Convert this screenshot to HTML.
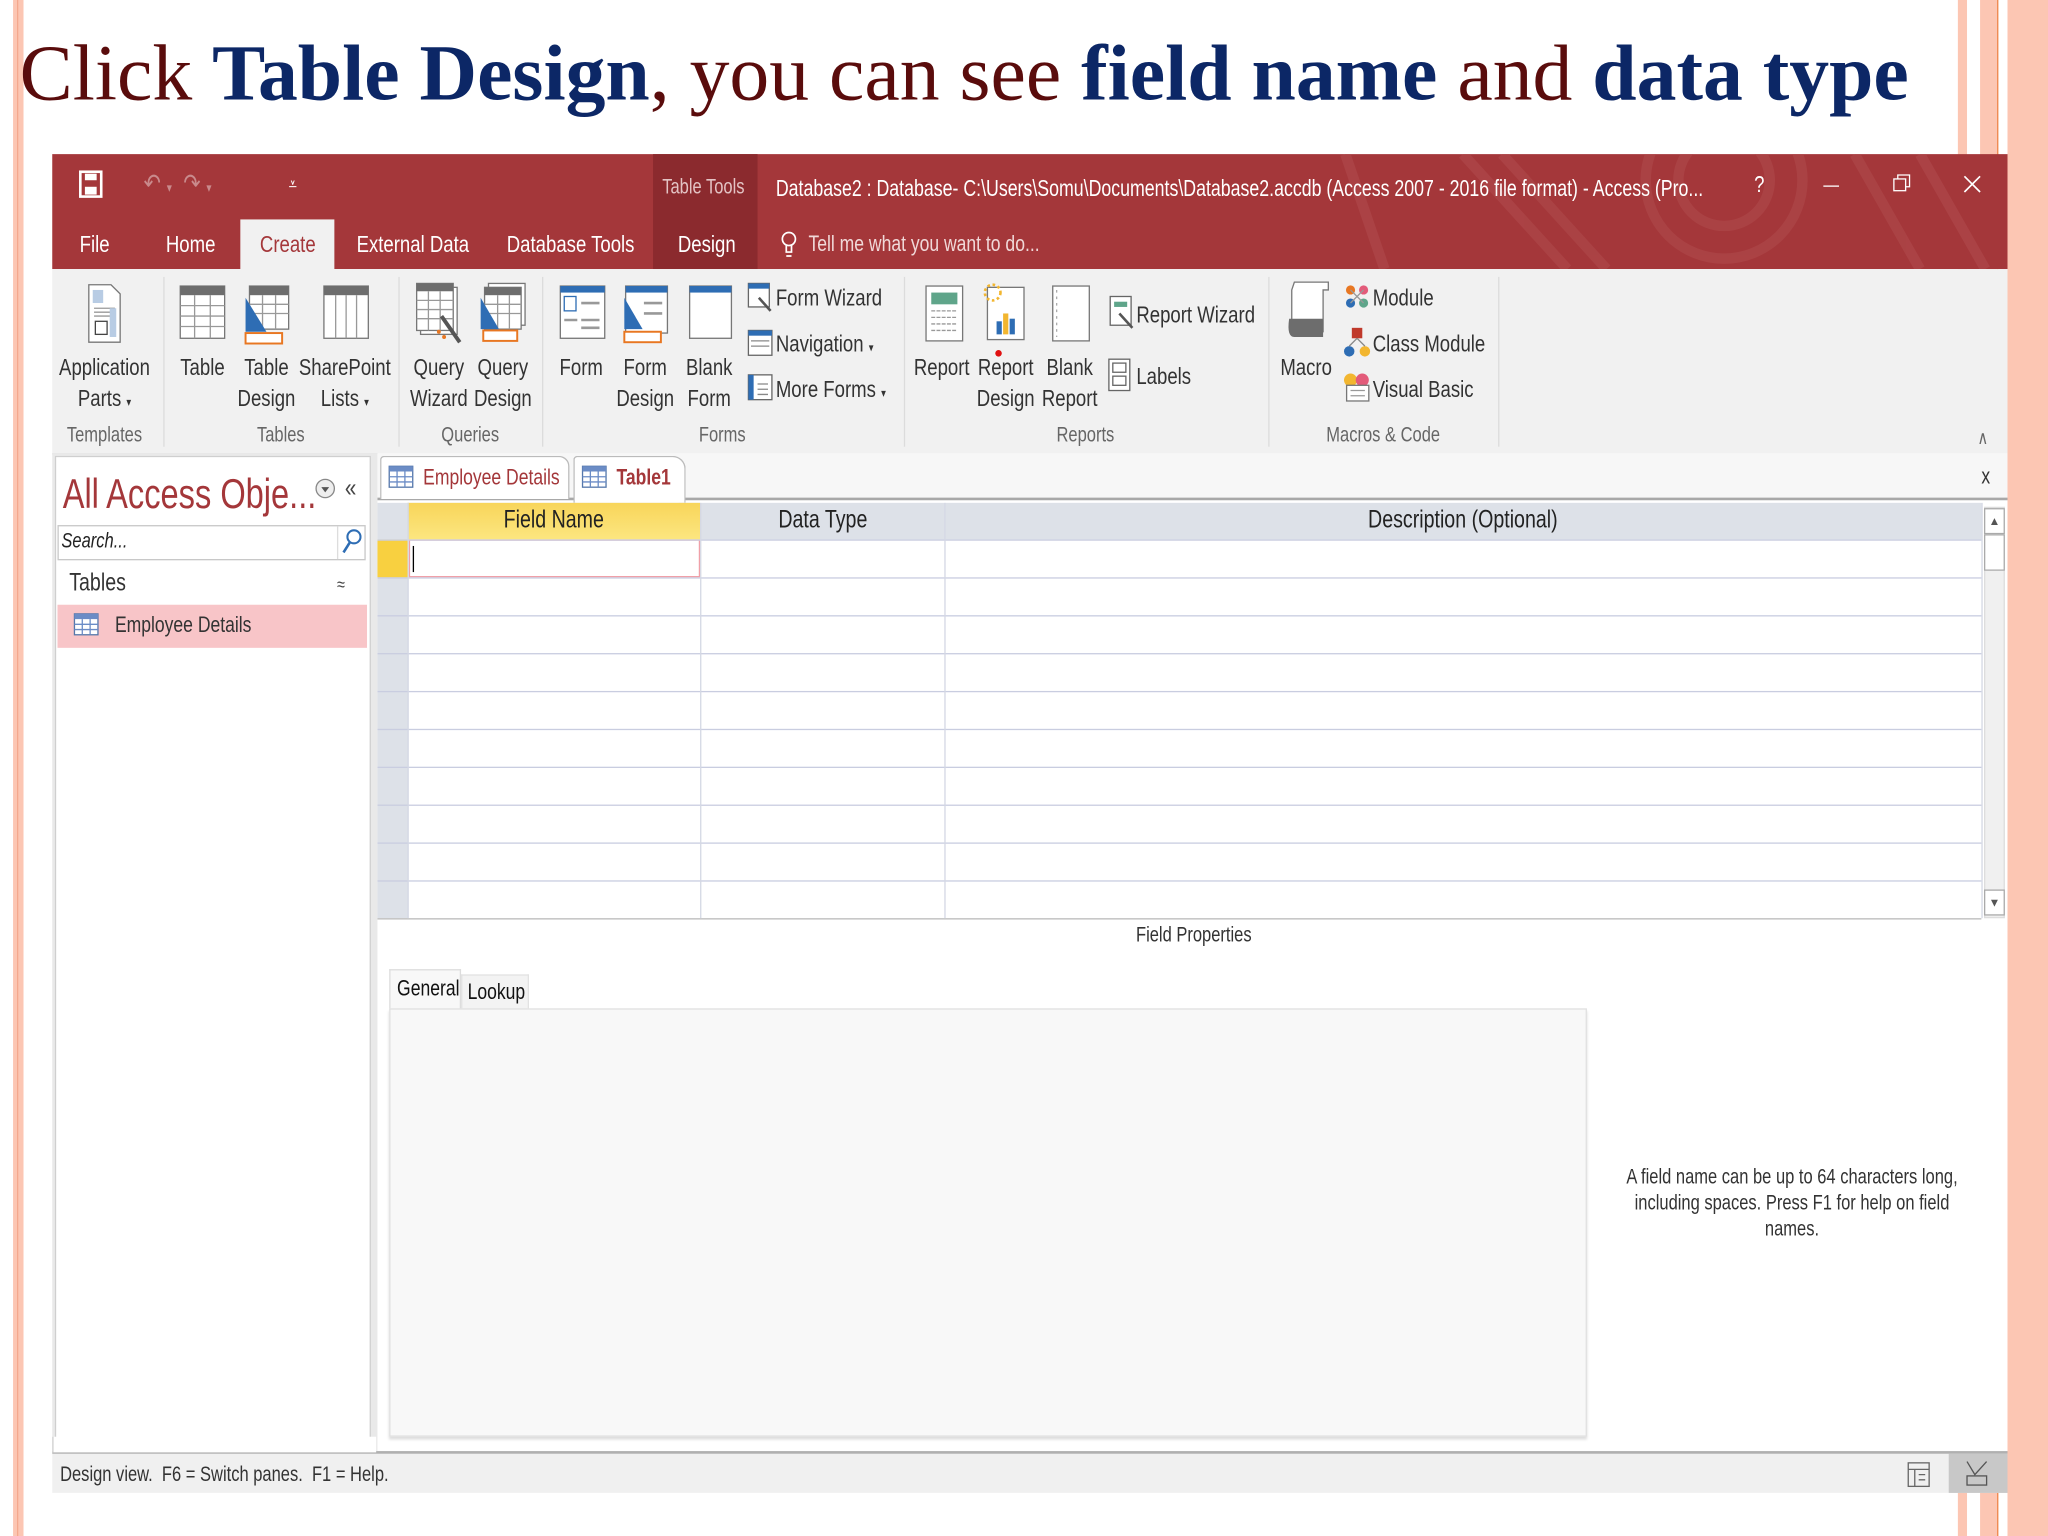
<!DOCTYPE html>
<html><head><meta charset="utf-8">
<style>
html,body{margin:0;padding:0;}
body{width:2048px;height:1536px;overflow:hidden;background:#fff;position:relative;}
#s{position:absolute;left:0;top:0;width:1568px;height:1176px;transform:scale(1.30612);transform-origin:0 0;font-family:"Liberation Sans",sans-serif;}
.a{position:absolute;}
.t{position:absolute;white-space:nowrap;transform-origin:0 50%;transform:scaleX(.79);line-height:20px;}
.c{position:absolute;white-space:nowrap;transform:translateX(-50%) scaleX(.79);line-height:20px;text-align:center;}
.rl{font-size:18px;color:#333;}
.gl{font-size:16px;color:#666;}
.sep{position:absolute;top:212px;width:1px;height:130px;background:#dcdcdc;}
.hl{position:absolute;left:289px;width:1228px;height:1px;background:#c9cde0;}
.vl{position:absolute;top:385px;width:1px;height:318px;background:#d4d8e4;}
</style></head><body>
<div id="s">
<!-- slide borders -->
<div class="a" style="left:10px;top:0;width:8px;height:1176px;background:#fcc6b3"></div>
<div class="a" style="left:13px;top:0;width:1px;height:1176px;background:#f4a88e"></div>
<div class="a" style="left:1499px;top:0;width:7px;height:1176px;background:#fcc6b3"></div>
<div class="a" style="left:1516px;top:0;width:14px;height:1176px;background:#fcc6b3"></div>
<div class="a" style="left:1529px;top:0;width:1px;height:1176px;background:#f0884e"></div>
<div class="a" style="left:1537px;top:0;width:31px;height:1176px;background:#fcc6b3"></div>

<!-- title -->
<div class="a" style="left:15px;top:19px;font-family:'Liberation Serif',serif;font-size:61px;line-height:75px;white-space:nowrap;color:#5a0c0c;">Click <b style="color:#0c2766">Table Design</b>, you can see <b style="color:#0c2766">field name</b> and <b style="color:#0c2766">data type</b></div>

<!-- window -->
<div class="a" style="left:40px;top:118px;width:1497px;height:88px;background:#a4373a"></div>
<div class="a" style="left:500px;top:118px;width:80px;height:88px;background:#8b2a2e"></div>
<svg class="a" style="left:1000px;top:118px" width="537" height="88"><g fill="none" stroke="#b04a4c" stroke-width="8" opacity=".6"><circle cx="320" cy="20" r="60"/><circle cx="320" cy="20" r="35"/><path d="M120 0 L200 88 M150 0 L230 88 M420 0 L470 88 M470 0 L520 88 M30 0 L60 88"/></g></svg>
<!-- title bar icons -->
<svg class="a" style="left:60px;top:130px" width="20" height="22"><rect x="1.5" y="1.5" width="16" height="19" fill="none" stroke="#fff" stroke-width="2"/><rect x="5" y="3" width="9" height="5" fill="#fff"/><rect x="5" y="13" width="9" height="6" fill="#fff"/></svg>
<div class="t" style="left:110px;top:131px;color:#c98a8c;font-size:20px">↶ <span style="font-size:10px">▾</span> &nbsp;↷ <span style="font-size:10px">▾</span></div>
<div class="t" style="left:221px;top:131px;color:#fff;font-size:14px">⩡</div>
<div class="t" style="left:507px;top:134px;color:#e3c3c4;font-size:16px">Table Tools</div>
<div class="t" style="left:594px;top:134px;color:#fff;font-size:18px;transform:scaleX(.755)">Database2 : Database- C:\Users\Somu\Documents\Database2.accdb (Access 2007 - 2016 file format) - Access (Pro...</div>
<div class="t" style="left:1343px;top:131px;color:#fff;font-size:18px">?</div>
<div class="a" style="left:1396px;top:142px;width:12px;height:1px;background:#fff"></div>
<svg class="a" style="left:1449px;top:133px" width="14" height="14"><rect x="1" y="4" width="9" height="9" fill="none" stroke="#fff"/><path d="M4 4 V1 H13 V10 H10" fill="none" stroke="#fff"/></svg>
<svg class="a" style="left:1503px;top:134px" width="14" height="14"><path d="M1 1 L13 13 M13 1 L1 13" stroke="#fff" stroke-width="1.3"/></svg>
<!-- tabs -->
<div class="a" style="left:184px;top:168px;width:72px;height:40px;background:#f1f1f1"></div>
<div class="t rl" style="left:61px;top:177px;color:#fff">File</div>
<div class="t rl" style="left:127px;top:177px;color:#fff">Home</div>
<div class="t rl" style="left:199px;top:177px;color:#a4373a">Create</div>
<div class="t rl" style="left:273px;top:177px;color:#fff">External Data</div>
<div class="t rl" style="left:388px;top:177px;color:#fff">Database Tools</div>
<div class="t rl" style="left:519px;top:177px;color:#fff">Design</div>
<svg class="a" style="left:598px;top:176px" width="12" height="22"><circle cx="6" cy="7" r="5" fill="none" stroke="#fff" stroke-width="1.3"/><path d="M4 12 V17 H8 V12 M4 20 H8" stroke="#fff" fill="none" stroke-width="1.3"/></svg>
<div class="t rl" style="left:619px;top:177px;color:#f0d8d8;font-size:17px">Tell me what you want to do...</div>

<!-- ribbon -->
<div class="a" style="left:40px;top:206px;width:1497px;height:141px;background:#f1f1f1;border-bottom:1px solid #d5d5d5"></div>
<div class="sep" style="left:125px"></div><div class="sep" style="left:305px"></div><div class="sep" style="left:415px"></div><div class="sep" style="left:692px"></div><div class="sep" style="left:971px"></div><div class="sep" style="left:1147px"></div>
<!-- icons -->
<svg class="a" style="left:66px;top:216px" width="28" height="48"><path d="M2 2 H19 L26 9 V46 H2 Z" fill="#fff" stroke="#777"/><rect x="5" y="6" width="8" height="10" fill="#b8cce4"/><path d="M6 20 H22 M6 23 H22 M6 26 H22" stroke="#999"/><rect x="7" y="30" width="9" height="10" fill="#fff" stroke="#444"/><rect x="18" y="20" width="5" height="22" fill="#b8cce4"/></svg>
<svg class="a" style="left:137px;top:218px" width="36" height="42"><rect x="1" y="1" width="34" height="40" fill="#fff" stroke="#777"/><rect x="1" y="1" width="34" height="7" fill="#6d6d6d"/><path d="M1 16 H35 M1 24 H35 M1 32 H35 M12 8 V41 M24 8 V41" stroke="#999"/></svg>
<svg class="a" style="left:186px;top:218px" width="38" height="46"><rect x="5" y="1" width="30" height="33" fill="#fff" stroke="#777"/><rect x="5" y="1" width="30" height="7" fill="#6d6d6d"/><path d="M5 15 H35 M5 22 H35 M15 8 V34 M25 8 V34" stroke="#999"/><path d="M2 10 L2 36 L18 36 Z" fill="#2e6db4"/><rect x="2" y="37" width="28" height="8" fill="#fff" stroke="#e87722" stroke-width="1.5"/></svg>
<svg class="a" style="left:247px;top:218px" width="36" height="42"><rect x="1" y="1" width="34" height="40" fill="#fff" stroke="#777"/><rect x="1" y="1" width="34" height="7" fill="#6d6d6d"/><path d="M10 8 V41 M18 8 V41 M26 8 V41" stroke="#999"/></svg>
<svg class="a" style="left:318px;top:216px" width="38" height="48"><rect x="4" y="4" width="28" height="36" fill="#fff" stroke="#777"/><rect x="1" y="1" width="28" height="36" fill="#fff" stroke="#777"/><rect x="1" y="1" width="28" height="6" fill="#6d6d6d"/><path d="M1 14 H29 M1 21 H29 M1 28 H29 M10 7 V37 M19 7 V37" stroke="#999"/><path d="M20 26 L34 46" stroke="#555" stroke-width="3"/><circle cx="18" cy="38" r="1.5" fill="#e87722"/><circle cx="22" cy="42" r="1.5" fill="#e87722"/></svg>
<svg class="a" style="left:366px;top:216px" width="38" height="48"><rect x="8" y="1" width="28" height="32" fill="#fff" stroke="#777"/><rect x="5" y="4" width="28" height="32" fill="#fff" stroke="#777"/><rect x="5" y="4" width="28" height="6" fill="#6d6d6d"/><path d="M5 17 H33 M5 24 H33 M15 10 V36 M24 10 V36" stroke="#999"/><path d="M2 12 L2 36 L16 36 Z" fill="#2e6db4"/><rect x="4" y="37" width="26" height="8" fill="#fff" stroke="#e87722" stroke-width="1.5"/></svg>
<svg class="a" style="left:428px;top:218px" width="36" height="44"><rect x="1" y="1" width="34" height="40" fill="#fff" stroke="#777"/><rect x="1" y="1" width="34" height="5" fill="#2e6db4"/><rect x="4" y="9" width="9" height="11" fill="#fff" stroke="#2e6db4"/><path d="M17 14 H31 M4 27 H14 M17 27 H31 M17 33 H31" stroke="#999" stroke-width="2"/></svg>
<svg class="a" style="left:476px;top:218px" width="38" height="46"><rect x="3" y="1" width="32" height="36" fill="#fff" stroke="#777"/><rect x="3" y="1" width="32" height="5" fill="#2e6db4"/><path d="M17 14 H31 M17 22 H31" stroke="#999" stroke-width="2"/><path d="M2 10 L2 34 L16 34 Z" fill="#2e6db4"/><rect x="2" y="36" width="28" height="8" fill="#fff" stroke="#e87722" stroke-width="1.5"/></svg>
<svg class="a" style="left:527px;top:218px" width="34" height="44"><rect x="1" y="1" width="32" height="40" fill="#fff" stroke="#777"/><rect x="1" y="1" width="32" height="5" fill="#2e6db4"/></svg>
<svg class="a" style="left:572px;top:216px" width="20" height="24"><rect x="1" y="1" width="16" height="18" fill="#fff" stroke="#666"/><rect x="1" y="1" width="16" height="4" fill="#2e6db4"/><path d="M9 12 L18 22" stroke="#555" stroke-width="2"/></svg>
<svg class="a" style="left:572px;top:252px" width="20" height="22"><rect x="1" y="1" width="18" height="19" fill="#fff" stroke="#666"/><rect x="1" y="1" width="18" height="4" fill="#2e6db4"/><path d="M3 9 H17 M3 13 H17" stroke="#888"/></svg>
<svg class="a" style="left:572px;top:286px" width="20" height="22"><rect x="1" y="1" width="18" height="19" fill="#fff" stroke="#666"/><rect x="1" y="1" width="4" height="19" fill="#2e6db4"/><path d="M8 8 H16 M8 12 H16 M8 16 H16" stroke="#888"/></svg>
<svg class="a" style="left:708px;top:218px" width="30" height="46"><rect x="1" y="1" width="28" height="42" fill="#fff" stroke="#777"/><rect x="5" y="6" width="20" height="9" fill="#5fa58a"/><path d="M5 20 H25 M5 25 H25 M5 30 H25 M5 35 H25" stroke="#999" stroke-dasharray="3 1"/></svg>
<svg class="a" style="left:750px;top:214px" width="36" height="50"><rect x="6" y="6" width="28" height="40" fill="#fff" stroke="#777"/><circle cx="10" cy="10" r="6" fill="none" stroke="#f2b630" stroke-width="2" stroke-dasharray="2 2"/><rect x="13" y="32" width="4" height="10" fill="#2e6db4"/><rect x="18" y="26" width="4" height="16" fill="#f2b630"/><rect x="23" y="30" width="4" height="12" fill="#2e6db4"/></svg>
<div class="a" style="left:762px;top:268px;width:5px;height:5px;border-radius:3px;background:#e01010"></div>
<svg class="a" style="left:805px;top:218px" width="30" height="46"><rect x="1" y="1" width="28" height="42" fill="#fff" stroke="#777"/><path d="M4 4 V40" stroke="#aaa" stroke-dasharray="2 3"/></svg>
<svg class="a" style="left:849px;top:226px" width="20" height="26"><rect x="1" y="1" width="16" height="22" fill="#fff" stroke="#666"/><rect x="4" y="5" width="10" height="4" fill="#5fa58a"/><path d="M8 14 L18 25" stroke="#555" stroke-width="2"/></svg>
<svg class="a" style="left:848px;top:274px" width="18" height="26"><rect x="1" y="1" width="16" height="24" fill="#fff" stroke="#666"/><rect x="4" y="4" width="10" height="7" fill="none" stroke="#666"/><rect x="4" y="14" width="10" height="7" fill="none" stroke="#666"/></svg>
<svg class="a" style="left:983px;top:214px" width="36" height="46"><path d="M8 2 H34 V8 H30 V40 H6 V8 Z" fill="#fff" stroke="#777"/><path d="M4 30 H30 V44 H8 Q2 44 4 30 Z" fill="#6d6d6d"/></svg>
<svg class="a" style="left:1028px;top:216px" width="22" height="22"><circle cx="6" cy="6" r="3.5" fill="#e87722"/><circle cx="16" cy="6" r="3.5" fill="#e35b7a"/><circle cx="6" cy="16" r="3.5" fill="#2e6db4"/><circle cx="16" cy="16" r="3.5" fill="#5fa58a"/><path d="M6 6 L16 16 M16 6 L6 16" stroke="#999"/></svg>
<svg class="a" style="left:1028px;top:250px" width="22" height="26"><rect x="7" y="1" width="8" height="8" fill="#c0392b"/><circle cx="5" cy="19" r="4" fill="#2e6db4"/><circle cx="17" cy="19" r="4" fill="#f2b630"/><path d="M11 9 L5 15 M11 9 L17 15" stroke="#888"/></svg>
<svg class="a" style="left:1028px;top:285px" width="22" height="24"><circle cx="6" cy="6" r="5" fill="#f2b630"/><circle cx="15" cy="6" r="5" fill="#e35b7a"/><rect x="3" y="10" width="17" height="12" fill="#fff" stroke="#777"/><path d="M6 14 H17 M6 18 H17" stroke="#999"/></svg>
<!-- ribbon labels -->
<div class="c rl" style="left:80px;top:271px">Application</div><div class="c rl" style="left:80px;top:295px">Parts <span style="font-size:9px">▾</span></div>
<div class="c rl" style="left:155px;top:271px">Table</div>
<div class="c rl" style="left:204px;top:271px">Table</div><div class="c rl" style="left:204px;top:295px">Design</div>
<div class="c rl" style="left:264px;top:271px">SharePoint</div><div class="c rl" style="left:264px;top:295px">Lists <span style="font-size:9px">▾</span></div>
<div class="c rl" style="left:336px;top:271px">Query</div><div class="c rl" style="left:336px;top:295px">Wizard</div>
<div class="c rl" style="left:385px;top:271px">Query</div><div class="c rl" style="left:385px;top:295px">Design</div>
<div class="c rl" style="left:445px;top:271px">Form</div>
<div class="c rl" style="left:494px;top:271px">Form</div><div class="c rl" style="left:494px;top:295px">Design</div>
<div class="c rl" style="left:543px;top:271px">Blank</div><div class="c rl" style="left:543px;top:295px">Form</div>
<div class="t rl" style="left:594px;top:218px">Form Wizard</div>
<div class="t rl" style="left:594px;top:253px">Navigation <span style="font-size:9px">▾</span></div>
<div class="t rl" style="left:594px;top:288px">More Forms <span style="font-size:9px">▾</span></div>
<div class="c rl" style="left:721px;top:271px">Report</div>
<div class="c rl" style="left:770px;top:271px">Report</div><div class="c rl" style="left:770px;top:295px">Design</div>
<div class="c rl" style="left:819px;top:271px">Blank</div><div class="c rl" style="left:819px;top:295px">Report</div>
<div class="t rl" style="left:870px;top:231px">Report Wizard</div>
<div class="t rl" style="left:870px;top:278px">Labels</div>
<div class="c rl" style="left:1000px;top:271px">Macro</div>
<div class="t rl" style="left:1051px;top:218px">Module</div>
<div class="t rl" style="left:1051px;top:253px">Class Module</div>
<div class="t rl" style="left:1051px;top:288px">Visual Basic</div>
<div class="c gl" style="left:80px;top:324px">Templates</div>
<div class="c gl" style="left:215px;top:324px">Tables</div>
<div class="c gl" style="left:360px;top:324px">Queries</div>
<div class="c gl" style="left:553px;top:324px">Forms</div>
<div class="c gl" style="left:831px;top:324px">Reports</div>
<div class="c gl" style="left:1059px;top:324px">Macros &amp; Code</div>
<div class="t" style="left:1514px;top:325px;color:#666;font-size:14px">∧</div>

<!-- nav pane -->
<div class="a" style="left:40px;top:347px;width:249px;height:765px;background:#e9e9e9"></div>
<div class="a" style="left:42px;top:349px;width:242px;height:763px;background:#fff;border:1px solid #cfcfcf;box-sizing:border-box"></div>
<div class="t" style="left:48px;top:362px;font-size:32px;line-height:32px;color:#a4373a;transform:scaleX(.78)">All Access Obje...</div>
<svg class="a" style="left:241px;top:365px" width="16" height="18"><circle cx="8" cy="9" r="7" fill="#eee" stroke="#888"/><path d="M5 8 L8 12 L11 8 Z" fill="#555"/></svg>
<div class="t" style="left:264px;top:364px;font-size:20px;color:#444">«</div>
<div class="a" style="left:44px;top:402px;width:236px;height:27px;border:1px solid #c8c8c8;background:#fff;box-sizing:border-box"></div>
<div class="a" style="left:258px;top:403px;width:1px;height:25px;background:#ddd"></div>
<div class="t" style="left:47px;top:405px;font-size:16px;font-style:italic;color:#222">Search...</div>
<svg class="a" style="left:261px;top:405px" width="16" height="20"><circle cx="10" cy="6" r="5" fill="none" stroke="#2e6db4" stroke-width="1.6"/><path d="M7 10 L2 18" stroke="#2e6db4" stroke-width="2"/></svg>
<div class="t" style="left:53px;top:437px;font-size:19px;color:#333">Tables</div>
<div class="t" style="left:258px;top:437px;font-size:14px;color:#444">≈</div>
<div class="a" style="left:44px;top:463px;width:237px;height:33px;background:#f8c5c8"></div>
<svg class="a" style="left:56px;top:469px" width="20" height="18"><rect x="1" y="1" width="18" height="16" fill="#fff" stroke="#5577aa"/><rect x="1" y="1" width="18" height="4" fill="#6b8cc6"/><path d="M1 9 H19 M1 13 H19 M7 5 V17 M13 5 V17" stroke="#6b8cc6"/></svg>
<div class="t" style="left:88px;top:469px;font-size:17px;color:#333">Employee Details</div>

<!-- doc area -->
<div class="a" style="left:289px;top:347px;width:1248px;height:765px;background:#fff"></div>
<div class="a" style="left:289px;top:347px;width:1248px;height:36px;background:#f7f7f7;border-bottom:2px solid #a8a8a8;box-sizing:border-box"></div>
<div class="a" style="left:291px;top:349px;width:145px;height:33px;background:#fff;border:1px solid #bbb;border-bottom:none;border-radius:3px 8px 0 0;box-sizing:border-box"></div>
<div class="a" style="left:439px;top:349px;width:86px;height:36px;background:#fff;border:1px solid #bbb;border-bottom:none;border-radius:3px 10px 0 0;box-sizing:border-box"></div>
<svg class="a" style="left:297px;top:356px" width="20" height="18"><rect x="1" y="1" width="18" height="16" fill="#fff" stroke="#5577aa"/><rect x="1" y="1" width="18" height="4" fill="#6b8cc6"/><path d="M1 9 H19 M1 13 H19 M7 5 V17 M13 5 V17" stroke="#6b8cc6"/></svg>
<svg class="a" style="left:445px;top:356px" width="20" height="18"><rect x="1" y="1" width="18" height="16" fill="#fff" stroke="#5577aa"/><rect x="1" y="1" width="18" height="4" fill="#6b8cc6"/><path d="M1 9 H19 M1 13 H19 M7 5 V17 M13 5 V17" stroke="#6b8cc6"/></svg>
<div class="t" style="left:324px;top:356px;font-size:17px;color:#a4373a">Employee Details</div>
<div class="t" style="left:472px;top:356px;font-size:17px;color:#a4373a;font-weight:bold">Table1</div>
<div class="t" style="left:1517px;top:355px;font-size:17px;color:#333">x</div>

<!-- grid -->
<div class="a" style="left:289px;top:385px;width:1228px;height:28px;background:#dde1e8"></div>
<div class="a" style="left:312px;top:385px;width:224px;height:28px;background:linear-gradient(#f8d55a,#fce680)"></div>
<div class="a" style="left:289px;top:413px;width:23px;height:290px;background:#dde1e8"></div>
<div class="a" style="left:289px;top:413px;width:23px;height:29px;background:#f8d040"></div>
<div class="a" style="left:313px;top:413px;width:223px;height:29px;border:1px solid #f0a0a8;box-sizing:border-box;background:#fff"></div>
<div class="a" style="left:316px;top:418px;width:1px;height:20px;background:#000"></div>
<div class="hl" style="top:413px"></div><div class="hl" style="top:442px"></div><div class="hl" style="top:471px"></div><div class="hl" style="top:500px"></div><div class="hl" style="top:529px"></div><div class="hl" style="top:558px"></div><div class="hl" style="top:587px"></div><div class="hl" style="top:616px"></div><div class="hl" style="top:645px"></div><div class="hl" style="top:674px"></div><div class="hl" style="top:703px;background:#bbb"></div>
<div class="vl" style="left:312px"></div><div class="vl" style="left:536px"></div><div class="vl" style="left:723px"></div><div class="vl" style="left:1517px"></div>
<div class="c" style="left:424px;top:389px;font-size:19px;color:#222">Field Name</div>
<div class="c" style="left:630px;top:389px;font-size:19px;color:#222">Data Type</div>
<div class="c" style="left:1120px;top:389px;font-size:19px;color:#222">Description (Optional)</div>
<div class="a" style="left:1519px;top:388px;width:16px;height:315px;background:#f0f0f0;border:1px solid #ddd;box-sizing:border-box"></div>
<div class="a" style="left:1519px;top:389px;width:16px;height:20px;background:#fff;border:1px solid #aaa;box-sizing:border-box;font-size:9px;text-align:center;line-height:18px;color:#555">▲</div>
<div class="a" style="left:1519px;top:409px;width:16px;height:28px;background:#fff;border:1px solid #aaa;box-sizing:border-box"></div>
<div class="a" style="left:1519px;top:681px;width:16px;height:20px;background:#fff;border:1px solid #aaa;box-sizing:border-box;font-size:9px;text-align:center;line-height:18px;color:#555">▼</div>

<div class="c" style="left:914px;top:707px;font-size:16px;color:#333">Field Properties</div>
<div class="a" style="left:298px;top:742px;width:55px;height:31px;background:#f8f8f8;border:1px solid #ddd;border-bottom:none;box-sizing:border-box"></div>
<div class="a" style="left:353px;top:746px;width:52px;height:27px;background:#f3f3f3;border:1px solid #e2e2e2;border-bottom:none;box-sizing:border-box"></div>
<div class="t" style="left:304px;top:747px;font-size:17px;color:#111">General</div>
<div class="t" style="left:358px;top:750px;font-size:17px;color:#111">Lookup</div>
<div class="a" style="left:298px;top:772px;width:917px;height:328px;background:#f8f8f8;border:1px solid #e0e0e0;box-shadow:0 2px 2px #ddd;box-sizing:border-box"></div>
<div class="c" style="left:1372px;top:892px;font-size:16px;color:#333">A field name can be up to 64 characters long,</div>
<div class="c" style="left:1372px;top:912px;font-size:16px;color:#333">including spaces. Press F1 for help on field</div>
<div class="c" style="left:1372px;top:932px;font-size:16px;color:#333">names.</div>

<!-- status -->
<div class="a" style="left:40px;top:1111px;width:1497px;height:32px;background:#f0f0f0;border-top:2px solid #b0b0b0;box-sizing:border-box"></div>
<div class="a" style="left:40px;top:1100px;width:248px;height:12px;background:#fff;border-left:1px solid #cfcfcf;box-sizing:border-box"></div>
<div class="t" style="left:46px;top:1120px;font-size:16px;color:#333">Design view.&nbsp; F6 = Switch panes.&nbsp; F1 = Help.</div>
<svg class="a" style="left:1460px;top:1119px" width="18" height="20"><rect x="1" y="1" width="16" height="18" fill="none" stroke="#666"/><path d="M1 6 H17 M6 6 V19 M9 10 H14 M9 14 H14" stroke="#666"/></svg>
<div class="a" style="left:1492px;top:1113px;width:45px;height:30px;background:#c8c8c8"></div>
<svg class="a" style="left:1504px;top:1117px" width="20" height="22"><path d="M2 2 L8 12 L17 2" fill="none" stroke="#555"/><rect x="2" y="13" width="15" height="7" fill="none" stroke="#555"/></svg>
</div>
</body></html>
